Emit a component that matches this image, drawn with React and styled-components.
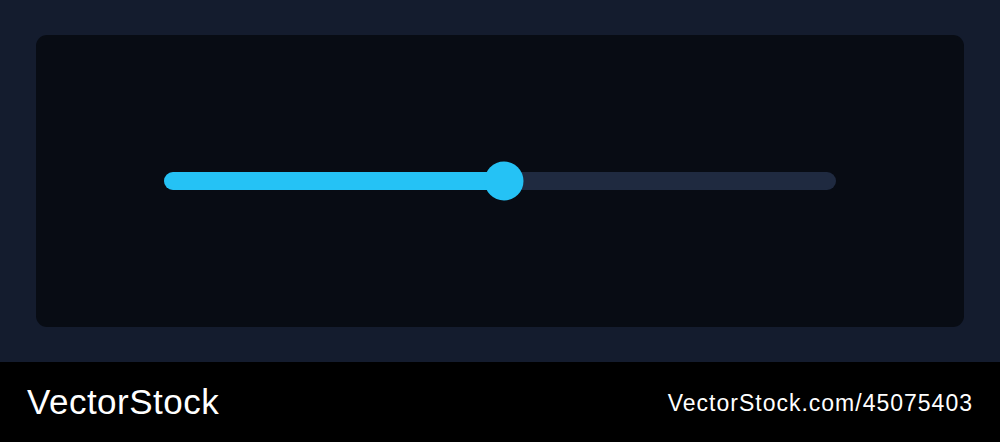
import React, { useState } from "react";
import styled, { createGlobalStyle } from "styled-components";

const GlobalStyle = createGlobalStyle`
  html, body {
    margin: 0;
    padding: 0;
    background: #141c2e;
  }
  * {
    box-sizing: border-box;
  }
`;

const Page = styled.div`
  width: 1000px;
  height: 442px;
  display: flex;
  flex-direction: column;
  font-family: "Liberation Sans", Arial, sans-serif;
`;

const Stage = styled.div`
  height: 362px;
  padding: 35px 36px;
  background: #141c2e;
  display: flex;
`;

const Panel = styled.div`
  flex: 1;
  background: #080c14;
  border-radius: 11px;
  display: flex;
  align-items: center;
  justify-content: center;
`;

const Track = styled.div`
  position: relative;
  width: 672px;
  height: 18px;
  border-radius: 9px;
  background: #1f2a40;
`;

const Fill = styled.div`
  height: 100%;
  border-radius: 9px 0 0 9px;
  background: #25c2f5;
`;

const Thumb = styled.div`
  position: absolute;
  top: 50%;
  width: 39px;
  height: 39px;
  border-radius: 50%;
  background: #25c2f5;
  transform: translate(-50%, -50%);
`;

const Footer = styled.div`
  height: 80px;
  background: #000;
  display: flex;
  align-items: center;
  justify-content: space-between;
  padding: 0 28px 0 27px;
  color: #fff;
`;

const Brand = styled.span`
  font-size: 35px;
  letter-spacing: 0.5px;
`;

const Link = styled.span`
  font-size: 23px;
  letter-spacing: 1px;
  margin-right: -1px;
  margin-top: 3px;
`;

export default function App() {
  const [value] = useState(50.6);

  return (
    <Page>
      <GlobalStyle />
      <Stage>
        <Panel>
          <Track>
            <Fill style={{ width: `${value}%` }} />
            <Thumb style={{ left: `${value}%` }} />
          </Track>
        </Panel>
      </Stage>
      <Footer>
        <Brand>VectorStock</Brand>
        <Link>VectorStock.com/45075403</Link>
      </Footer>
    </Page>
  );
}
